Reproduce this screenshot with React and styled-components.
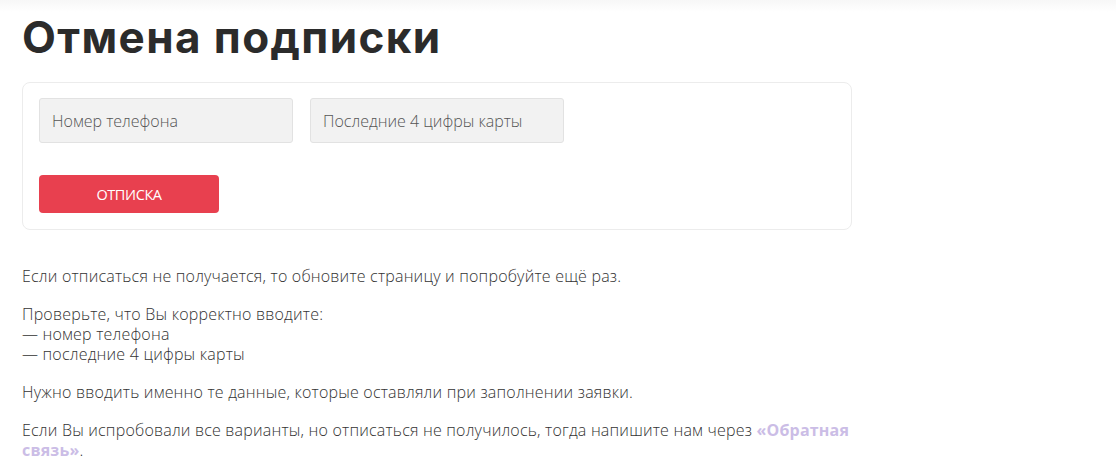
import React from 'react';
import styled, { createGlobalStyle } from 'styled-components';

const GlobalStyle = createGlobalStyle`
  html, body {
    margin: 0;
    padding: 0;
    background: #fff;
  }
  body {
    font-family: "Open Sans", "Noto Sans", sans-serif;
    color: #333;
  }
`;

// тень от шапки
const TopShade = styled.div`
  height: 12px;
  background: linear-gradient(#f7f7f7, #fff);
`;

const Page = styled.main`
  padding: 0 22px;
  width: 830px;
`;

const Title = styled.h1`
  margin: 0 0 20px;
  font-family: Inter, "Noto Sans", sans-serif;
  font-size: 44px;
  font-weight: 700;
  line-height: 50px;
  color: #2b2b2b;
  letter-spacing: 1.4px;
`;

const Card = styled.form`
  display: flex;
  flex-direction: column;
  gap: 32px;
  padding: 15px 16px 16px;
  border: 1px solid #ececec;
  border-radius: 8px;
`;

const Fields = styled.div`
  display: flex;
  gap: 17px;
`;

const Field = styled.input`
  box-sizing: border-box;
  width: 254px;
  height: 45px;
  padding: 0 12px;
  border: 1px solid #e2e2e2;
  border-radius: 3px;
  background: #f2f2f2;
  font-family: "Open Sans", "Noto Sans", sans-serif;
  font-size: 16px;
  font-weight: 300;
  color: #333;
  outline: none;

  &::placeholder {
    color: #555;
  }
`;

const Button = styled.button`
  width: 180px;
  height: 38px;
  border: none;
  border-radius: 4px;
  background: #e8404f;
  color: #fff;
  font-family: "Open Sans", "Noto Sans", sans-serif;
  font-size: 14.5px;
  font-weight: 400;
  letter-spacing: -0.4px;
  cursor: pointer;
`;

const Info = styled.div`
  margin-top: 36px;
  font-size: 16px;
  font-weight: 300;
  line-height: 20px;
  letter-spacing: 0.2px;
  color: #333;
`;

const Paragraph = styled.p`
  margin: 0 0 18px;
`;

const Link = styled.a`
  color: #cbbde6;
  font-weight: 700;
  text-decoration: none;
`;

const App = () => {
  return (
    <>
      <GlobalStyle />
      <TopShade />
      <Page>
        <Title>Отмена подписки</Title>
        <Card onSubmit={(e) => e.preventDefault()}>
          <Fields>
            <Field type="tel" placeholder="Номер телефона" />
            <Field type="text" placeholder="Последние 4 цифры карты" />
          </Fields>
          <Button type="submit">ОТПИСКА</Button>
        </Card>
        <Info>
          <Paragraph>
            Если отписаться не получается, то обновите страницу и попробуйте ещё раз.
          </Paragraph>
          <Paragraph>
            Проверьте, что Вы корректно вводите:
            <br />— номер телефона
            <br />— последние 4 цифры карты
          </Paragraph>
          <Paragraph>
            Нужно вводить именно те данные, которые оставляли при заполнении заявки.
          </Paragraph>
          <Paragraph>
            Если Вы испробовали все варианты, но отписаться не получилось, тогда напишите нам через{' '}
            <Link href="#">«Обратная связь»</Link>.
          </Paragraph>
        </Info>
      </Page>
    </>
  );
};

export default App;
